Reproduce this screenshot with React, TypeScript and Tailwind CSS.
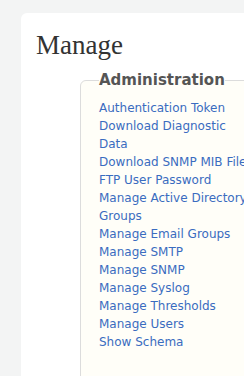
const LINKS = [
  'Authentication Token',
  'Download Diagnostic Data',
  'Download SNMP MIB File',
  'FTP User Password',
  'Manage Active Directory Groups',
  'Manage Email Groups',
  'Manage SMTP',
  'Manage SNMP',
  'Manage Syslog',
  'Manage Thresholds',
  'Manage Users',
  'Show Schema',
];

export default function App() {
  return (
    <div className="h-[376px] w-[244px] overflow-hidden bg-[#f3f4f4] pl-[21px] pt-[13px]">
      <div className="h-[400px] w-[300px] rounded-tl-md bg-white pl-[15px] pt-[16px]">
        <h1 className="font-['Liberation_Serif',serif] text-[27px] leading-[32px] text-[#333]">Manage</h1>
        <fieldset className="ml-[44px] mt-[10px] h-[320px] w-[220px] rounded-md border border-[#dcdcdc] bg-[#fffef8] pl-[18px]">
          <legend className="font-['DejaVu_Sans',sans-serif] text-[15px] font-bold leading-[18px] text-[#555]">
            Administration
          </legend>
          <ul className="mt-[10px] w-[152px] font-['DejaVu_Sans',sans-serif] text-[12px] leading-[18px]">
            {LINKS.map(l => (
              <li key={l}>
                <a href="#" className="text-[#3a6cc0]">{l}</a>
              </li>
            ))}
          </ul>
        </fieldset>
      </div>
    </div>
  );
}
